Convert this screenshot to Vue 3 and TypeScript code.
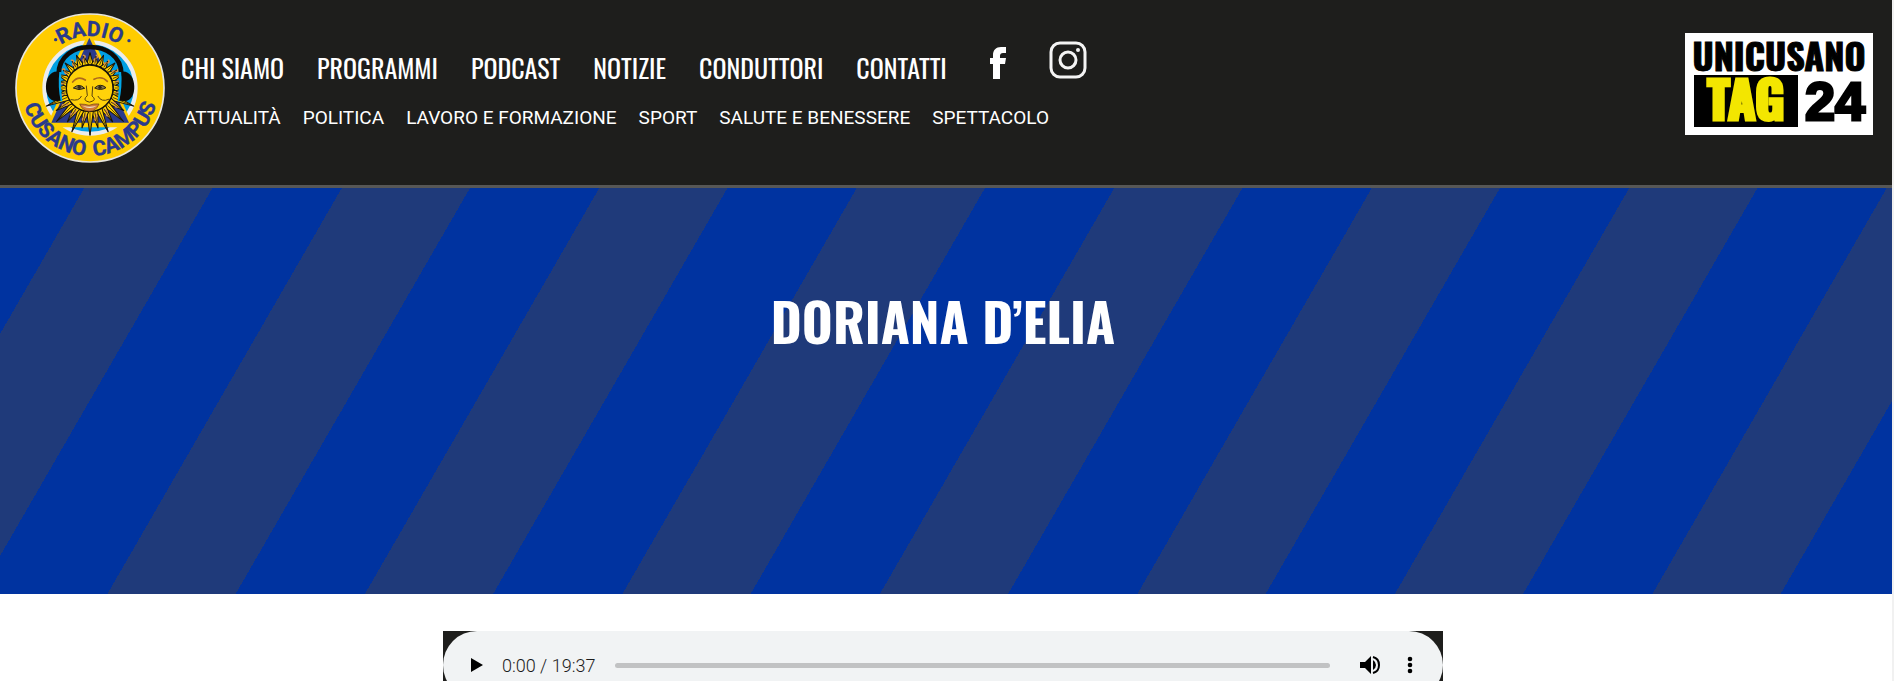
<script setup lang="ts">
import { ref } from 'vue'

const mainLinks: string[] = ['Chi siamo', 'Programmi', 'Podcast', 'Notizie', 'Conduttori', 'Contatti']
const topicLinks: string[] = [
  'Attualità',
  'Politica',
  'Lavoro e formazione',
  'Sport',
  'Salute e benessere',
  'Spettacolo',
]

const position = ref<number>(0)

interface Ray {
  angle: number
  tip: number
}

// Sun rays fan out around the face; those below the headphones reach further.
const rays: Ray[] = Array.from({ length: 32 }, (_, i) => {
  const angle = i * 11.25
  const low = angle > 110 && angle < 250
  const long = low ? 122 : 158
  const short = low ? 142 : 168
  return { angle, tip: i % 2 === 0 ? long : short }
})
const curls: number[] = Array.from({ length: 16 }, (_, i) => i * 22.5 + 11.25)
</script>

<template>
  <div class="page">
    <header class="header">
      <a class="logo" href="#" aria-label="Radio Cusano Campus">
        <svg viewBox="45 39 450 450" aria-hidden="true">
          <defs>
            <path id="arc-top" d="M114 264A156 156 0 0 1 426 264" />
            <path id="arc-bottom" d="M66 264A204 204 0 0 0 474 264" />
          </defs>
          <circle cx="270" cy="264" r="222" fill="#ffcc00" stroke="#e9e7dd" stroke-width="5" />
          <circle cx="270" cy="264" r="137" fill="#009fe3" stroke="#ececec" stroke-width="12" />
          <path d="M268 92L138 382H402Z" fill="#ffcc00" />
          <path d="M268 113L154 368H387Z" fill="#2a3a8c" />
          <g fill="#ffd000" stroke="#17130b" stroke-width="3" stroke-linejoin="round">
            <path
              v-for="ray in rays"
              :key="ray.angle"
              :d="`M260 194L270 ${ray.tip}L280 194Z`"
              :transform="`rotate(${ray.angle} 270 264)`"
            />
          </g>
          <g fill="none" stroke="#d99145" stroke-width="5" stroke-linecap="round">
            <path
              v-for="angle in curls"
              :key="angle"
              d="M270 184q-8-6 0-11t0-9"
              :transform="`rotate(${angle} 270 264)`"
            />
          </g>
          <g fill="none" stroke="#17130b" stroke-width="2">
            <path
              v-for="ray in rays"
              :key="ray.angle"
              :d="`M270 190V${ray.tip}`"
              :transform="`rotate(${ray.angle} 270 264)`"
            />
          </g>
          <path d="M176 222C176 114 364 114 364 222" fill="none" stroke="#0d0b08" stroke-width="14" />
          <path d="M184 216Q180 260 187 304L178 304Q170 260 176 216Z" fill="#00a6e6" />
          <path d="M356 216Q360 260 353 304L362 304Q370 260 364 216Z" fill="#00a6e6" />
          <path d="M176 215C126 208 126 310 172 303L182 302Q173 260 178 215Z" fill="#0d0b08" />
          <path d="M364 215C414 208 416 310 370 303L358 302Q367 260 364 215Z" fill="#0d0b08" />
          <circle cx="269" cy="265" r="70" fill="#ffd20a" stroke="#17130b" stroke-width="4" />
          <g fill="none" stroke="#ad681d" stroke-width="5" stroke-linecap="round">
            <path d="M218 246Q234 226 256 240" />
            <path d="M282 238Q305 226 322 244" />
          </g>
          <g fill="#8f7b45" stroke="#27200f" stroke-width="3">
            <path d="M220 264Q238 248 254 265Q237 273 220 264Z" />
            <path d="M284 264Q300 248 318 263Q302 273 284 264Z" />
          </g>
          <circle cx="238" cy="262" r="5" fill="#332a18" />
          <circle cx="300" cy="262" r="5" fill="#332a18" />
          <g fill="none" stroke="#59410f" stroke-width="3" stroke-linecap="round">
            <path d="M259 258L262 287Q248 299 261 304Q268 309 276 304Q290 299 276 288L278 260" />
            <path d="M213 299Q237 305 244 289" />
            <path d="M326 298Q304 308 294 289" />
          </g>
          <path
            d="M239 312Q255 312 267 316Q281 310 297 312Q288 334 268 334Q248 333 239 312Z"
            fill="#d37b3a"
            stroke="#69400f"
            stroke-width="2"
          />
          <path d="M247 317Q268 323 290 317Q270 331 247 317Z" fill="#efe8d5" />
          <g class="ring-text">
            <text><textPath href="#arc-top" startOffset="50%">RADIO</textPath></text>
            <text><textPath href="#arc-bottom" startOffset="28%">CUSANO</textPath></text>
            <text><textPath href="#arc-bottom" startOffset="72%">CAMPUS</textPath></text>
          </g>
          <circle cx="167" cy="119" r="5" fill="#2a3a8c" />
          <circle cx="387" cy="122" r="5" fill="#2a3a8c" />
        </svg>
      </a>

      <div class="menus">
        <nav class="main-nav" aria-label="Menu principale">
          <a v-for="link in mainLinks" :key="link" href="#">{{ link }}</a>
          <span class="social">
            <a href="#" aria-label="Facebook">
              <svg width="16" height="32" viewBox="0 0 16 32" aria-hidden="true">
                <path
                  d="M3 32V17H0V11H3V8C3 3 6 0 11 0H16V6H13Q10 6 10 9V11H16L15 17H10V32Z"
                  fill="#fff"
                />
              </svg>
            </a>
            <a href="#" aria-label="Instagram">
              <svg width="38" height="38" viewBox="0 0 38 38" fill="none" stroke="#f4f4f4" aria-hidden="true">
                <rect x="2" y="2" width="34" height="34" rx="9" stroke-width="3" />
                <circle cx="19" cy="19" r="8" stroke-width="3" />
                <circle cx="29" cy="9" r="2" fill="#f4f4f4" stroke="none" />
              </svg>
            </a>
          </span>
        </nav>
        <nav class="topic-nav" aria-label="Argomenti">
          <a v-for="link in topicLinks" :key="link" href="#">{{ link }}</a>
        </nav>
      </div>

      <a class="partner" href="#" aria-label="Unicusano Tag 24">
        <svg viewBox="0 0 188 102" aria-hidden="true">
          <rect width="188" height="102" fill="#fff" />
          <text class="partner-name" x="94" y="38">UNICUSANO</text>
          <rect x="9" y="42" width="104" height="52" fill="#000" />
          <text class="partner-tag" x="61" y="87">TAG</text>
          <text class="partner-number" x="150" y="87">24</text>
        </svg>
      </a>
    </header>

    <section class="hero">
      <h1>Doriana D’Elia</h1>
    </section>

    <main class="content">
      <div class="player-box">
        <div class="player">
          <button type="button" aria-label="Riproduci">
            <svg width="28" height="28" viewBox="0 0 28 28" aria-hidden="true">
              <path d="M8 7V21L20 14Z" fill="#000" />
            </svg>
          </button>
          <span class="time">0:00 / 19:37</span>
          <input v-model.number="position" class="track" type="range" min="0" max="1177" aria-label="Posizione" />
          <button type="button" aria-label="Volume">
            <svg width="28" height="28" viewBox="0 0 28 28" aria-hidden="true">
              <path d="M4 11V17H9L15 23V5L9 11Z" fill="#000" />
              <path d="M17 9Q20 11 20 14T17 19Z" fill="#000" />
              <path d="M17 6C25 8 25 20 17 22" fill="none" stroke="#000" stroke-width="2" />
            </svg>
          </button>
          <button type="button" aria-label="Altre opzioni">
            <svg width="28" height="28" viewBox="0 0 28 28" aria-hidden="true">
              <circle cx="14" cy="8" r="2.3" />
              <circle cx="14" cy="14" r="2.3" />
              <circle cx="14" cy="20" r="2.3" />
            </svg>
          </button>
        </div>
      </div>
    </main>
  </div>
</template>

<style>
body {
  margin: 0;
  background: #fff;
}
</style>

<style scoped>
.page {
  box-sizing: border-box;
  height: 100vh;
  overflow: hidden;
  border-right: 2px solid #f1f1f1;
  background: #fff;
  font-family: Roboto, 'Liberation Sans', sans-serif;
}

a {
  color: #fff;
  text-decoration: none;
}

svg {
  display: block;
}

.header {
  display: flex;
  align-items: flex-start;
  box-sizing: border-box;
  min-height: 188px;
  padding: 13px 19px 0 15px;
  border-bottom: 3px solid #575756;
  background: #1e1e1c;
}

.logo svg {
  width: 150px;
  height: 150px;
}

.ring-text {
  fill: #2a3a8c;
  stroke: #2a3a8c;
  stroke-width: 1px;
  font-family: Roboto, 'Liberation Sans', sans-serif;
  font-size: 63px;
  font-weight: 700;
  text-anchor: middle;
}

.menus {
  padding: 27px 0 0 16px;
}

.main-nav,
.topic-nav {
  display: flex;
  white-space: nowrap;
  text-transform: uppercase;
}

.main-nav {
  gap: 33px;
  align-items: center;
  height: 56px;
  font-family: Oswald, 'Liberation Sans', sans-serif;
  font-size: 26px;
  font-weight: 400;
  line-height: 32px;
}

.social {
  display: flex;
  gap: 43px;
  align-items: flex-end;
  height: 38px;
  margin: 0 0 16px 10px;
}

.topic-nav {
  gap: 22px;
  padding: 9px 0 0 3px;
  font-size: 19px;
  line-height: 26px;
}

.partner {
  margin: 20px 0 0 auto;
}

.partner svg {
  width: 188px;
  height: 102px;
}

.partner text {
  font-family: Oswald, 'Liberation Sans', sans-serif;
  font-weight: 700;
  text-anchor: middle;
}

.partner .partner-name {
  font-size: 36px;
  stroke: #000;
  stroke-width: 1px;
}

.partner .partner-tag {
  fill: #f3e600;
  stroke: #f3e600;
  stroke-width: 3px;
  font-size: 51px;
}

.partner .partner-number {
  stroke: #000;
  stroke-width: 3px;
  font-family: 'Liberation Sans', sans-serif;
  font-size: 54px;
}

.hero {
  box-sizing: border-box;
  min-height: 406px;
  padding: 96px 6px 0 0;
  background: repeating-linear-gradient(
    120deg,
    #0033a0 0 73px,
    #1f3a7a 73px 184px,
    #0033a0 184px 223px
  );
}

h1 {
  margin: 0;
  color: #fff;
  font-family: Oswald, 'Liberation Sans', sans-serif;
  font-size: 53px;
  font-weight: 700;
  line-height: 72px;
  text-align: center;
  text-transform: uppercase;
}

.content {
  padding: 37px 6px 0 0;
}

.player-box {
  max-width: 1000px;
  margin: 0 auto;
  background: #1e1e1c;
}

.player {
  display: flex;
  align-items: center;
  box-sizing: border-box;
  height: 68px;
  padding: 0 19px 0 20px;
  border-radius: 34px;
  background: #f1f3f4;
}

.player button {
  padding: 0;
  border: 0;
  background: none;
}

.player button + button {
  margin-left: 12px;
}

.time {
  margin: 0 20px 0 11px;
  color: #1c1c1c;
  font-size: 18px;
  font-weight: 300;
}

.track {
  flex: 1;
  height: 5px;
  margin: 0 26px 0 0;
  appearance: none;
  border-radius: 3px;
  background: #c1c2c3;
}

.track::-webkit-slider-thumb {
  width: 1px;
  height: 1px;
  appearance: none;
  background: transparent;
}
</style>
